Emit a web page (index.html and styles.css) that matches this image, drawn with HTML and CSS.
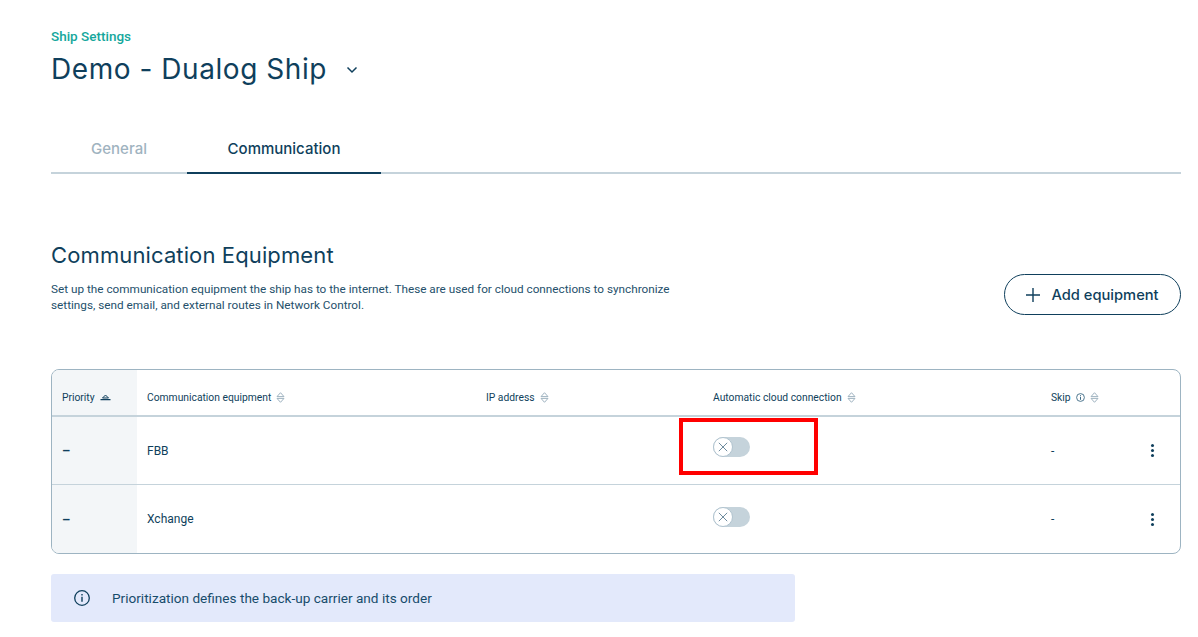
FILE: index.html
```html
<!DOCTYPE html>
<html>
<head>
    <title>Ship Settings</title>
    <link rel="stylesheet" href="styles.css">
</head>
<body>
    <div class="page">
        <header class="page-head">
            <div class="eyebrow">Ship Settings</div>
            <div class="title-row">
                <h1>Demo - Dualog Ship</h1>
                <svg class="chevron" width="12" height="8" viewBox="0 0 12 8"><path d="M1.5 1.5 6 6l4.5-4.5" fill="none" stroke="#0f3f5c" stroke-width="1.5"/></svg>
            </div>
        </header>

        <nav class="tabs">
            <a class="tab">General</a>
            <a class="tab tab-active">Communication</a>
        </nav>

        <section class="equipment">
            <div class="equipment-text">
                <h2>Communication Equipment</h2>
                <p>Set up the communication equipment the ship has to the internet. These are used for cloud connections to synchronize settings, send email, and external routes in Network Control.</p>
            </div>
            <button class="add-btn">
                <svg width="14" height="14" viewBox="0 0 14 14"><path d="M7 0v14M0 7h14" fill="none" stroke="#0f3f5c" stroke-width="1.4"/></svg>
                Add equipment
            </button>
        </section>

        <div class="table">
            <div class="row row-head">
                <div class="cell cell-priority">Priority
                    <svg class="sort" width="11" height="7" viewBox="0 0 11 7"><path d="M5.5 1 8.5 4h-6z" fill="#dfe7ec" stroke="#0f3f5c"/><path d="M.5 5.6h10" stroke="#0f3f5c" stroke-width="1.2"/></svg>
                </div>
                <div class="cell">Communication equipment
                    <svg class="sort" width="9" height="11" viewBox="0 0 9 11"><path d="M4.5 .7 8 4.6H1zM4.5 10.3 1 6.4h7z" fill="none" stroke="#9fb3c0"/></svg>
                </div>
                <div class="cell">IP address
                    <svg class="sort" width="9" height="11" viewBox="0 0 9 11"><path d="M4.5 .7 8 4.6H1zM4.5 10.3 1 6.4h7z" fill="none" stroke="#9fb3c0"/></svg>
                </div>
                <div class="cell">Automatic cloud connection
                    <svg class="sort" width="9" height="11" viewBox="0 0 9 11"><path d="M4.5 .7 8 4.6H1zM4.5 10.3 1 6.4h7z" fill="none" stroke="#9fb3c0"/></svg>
                </div>
                <div class="cell">Skip
                    <svg class="info-small" width="9" height="9" viewBox="0 0 9 9"><circle cx="4.5" cy="4.5" r="3.9" fill="none" stroke="#3d6a85" stroke-width=".9"/><path d="M4.5 2.2v.9M4.5 3.8v3" stroke="#3d6a85"/></svg>
                    <svg class="sort" width="9" height="11" viewBox="0 0 9 11"><path d="M4.5 .7 8 4.6H1zM4.5 10.3 1 6.4h7z" fill="none" stroke="#9fb3c0"/></svg>
                </div>
                <div class="cell"></div>
            </div>

            <div class="row row-body row-first">
                <div class="cell cell-priority cell-dash">–</div>
                <div class="cell">FBB</div>
                <div class="cell"></div>
                <div class="cell cell-toggle">
                    <span class="toggle"><span class="knob"><svg width="10" height="10" viewBox="0 0 10 10"><path d="M.8.8l8.4 8.4M9.2.8.8 9.2" stroke="#6f8c9e" stroke-width="1"/></svg></span></span>
                    <span class="highlight"></span>
                </div>
                <div class="cell">-</div>
                <div class="cell cell-menu"><span class="kebab"><i></i><i></i><i></i></span></div>
            </div>

            <div class="row row-body">
                <div class="cell cell-priority cell-dash">–</div>
                <div class="cell">Xchange</div>
                <div class="cell"></div>
                <div class="cell cell-toggle">
                    <span class="toggle"><span class="knob"><svg width="10" height="10" viewBox="0 0 10 10"><path d="M.8.8l8.4 8.4M9.2.8.8 9.2" stroke="#6f8c9e" stroke-width="1"/></svg></span></span>
                </div>
                <div class="cell">-</div>
                <div class="cell cell-menu"><span class="kebab"><i></i><i></i><i></i></span></div>
            </div>
        </div>

        <div class="notice">
            <svg width="18" height="18" viewBox="0 0 18 18"><circle cx="9" cy="9" r="7.3" fill="none" stroke="#0f3f5c" stroke-width="1.3"/><path d="M9 4.9v1.5M9 7.8v5" stroke="#0f3f5c" stroke-width="1.4"/></svg>
            <span>Prioritization defines the back-up carrier and its order</span>
        </div>
    </div>
</body>
</html>
```

FILE: styles.css
```css
html, body { margin: 0; background: #fff; }
body { font-family: Roboto, Arial, sans-serif; color: #0f3f5c; overflow: hidden; }
.page { padding: 28px 17px 0 51px; height: 609px; }

.eyebrow { font-size: 13.5px; line-height: 16px; font-weight: 500; color: #14a79c; }
.title-row { display: flex; align-items: center; gap: 19px; margin-top: 6px; }
h1 { margin: 0; font-family: Inter, Arial, sans-serif; font-size: 28px; line-height: 38px; font-weight: 400; letter-spacing: 0.55px; }
.chevron { margin-top: 2px; }

.tabs { display: flex; margin-top: 36px; border-bottom: 2px solid #c5d3db; height: 48px; }
.tab { display: flex; align-items: center; justify-content: center; box-sizing: border-box; margin-bottom: -2px; border-bottom: 2px solid transparent; font-family: Inter, Arial, sans-serif; font-size: 15px; font-weight: 500; width: 136px; color: #9fb3c0; }
.tab-active { width: 194px; color: #0f3f5c; border-bottom-color: #0f3f5c; }

.equipment { display: flex; justify-content: space-between; align-items: flex-start; margin-top: 66px; }
.equipment-text { width: 640px; }
h2 { margin: 0; font-family: Inter, Arial, sans-serif; font-size: 22px; line-height: 30px; font-weight: 400; letter-spacing: 0.12px; }
p { margin: 11px 0 0; font-size: 11.75px; line-height: 16px; color: #24506b; }
.add-btn { display: flex; align-items: center; justify-content: center; gap: 11px; width: 177px; height: 41px; margin-top: 34px; padding: 0; background: #fff; border: 1px solid #0f3f5c; border-radius: 21px; color: #0f3f5c; font-family: Inter, Arial, sans-serif; font-size: 14.7px; font-weight: 500; }

.table { margin-top: 54px; border: 1px solid #9db4c2; border-radius: 8px; overflow: hidden; }
.row { display: grid; grid-template-columns: 85px 339px 227px 338px 1fr 42px; box-sizing: border-box; }
.row-head { height: 47px; border-bottom: 2px solid #c5d3db; font-size: 10.3px; }
.row-head .cell { padding-top: 10px; }
.row-body { height: 68px; font-size: 12px; }
.row-first { border-bottom: 1px solid #c5d3db; }
.cell { display: flex; align-items: center; gap: 5px; padding-left: 10px; position: relative; box-sizing: border-box; }
.cell-priority { background: #f3f6f8; }
.cell-dash { font-weight: 700; font-size: 13px; }
.cell-toggle { align-items: flex-start; padding-top: 20px; }
.row-body:last-child .cell-toggle { padding-top: 22px; }
.cell-menu { padding-left: 13px; }

.toggle { display: block; width: 37px; height: 20px; border-radius: 10px; background: #c5d3db; }
.knob { display: flex; align-items: center; justify-content: center; width: 20px; height: 20px; box-sizing: border-box; border: 1.5px solid #b0c3cf; border-radius: 50%; background: #fff; }
.highlight { position: absolute; left: -24px; top: 1px; width: 139px; height: 57px; box-sizing: border-box; border: 4px solid #f00; }

.kebab { display: flex; flex-direction: column; gap: 2px; }
.kebab i { display: block; width: 3px; height: 3px; border-radius: 50%; background: #0f3f5c; }

.notice { display: flex; align-items: center; gap: 21px; width: 744px; height: 48px; margin-top: 20px; padding-left: 22px; box-sizing: border-box; background: #e3e9fb; border-radius: 3px; font-size: 13.6px; color: #174c6b; }
```
